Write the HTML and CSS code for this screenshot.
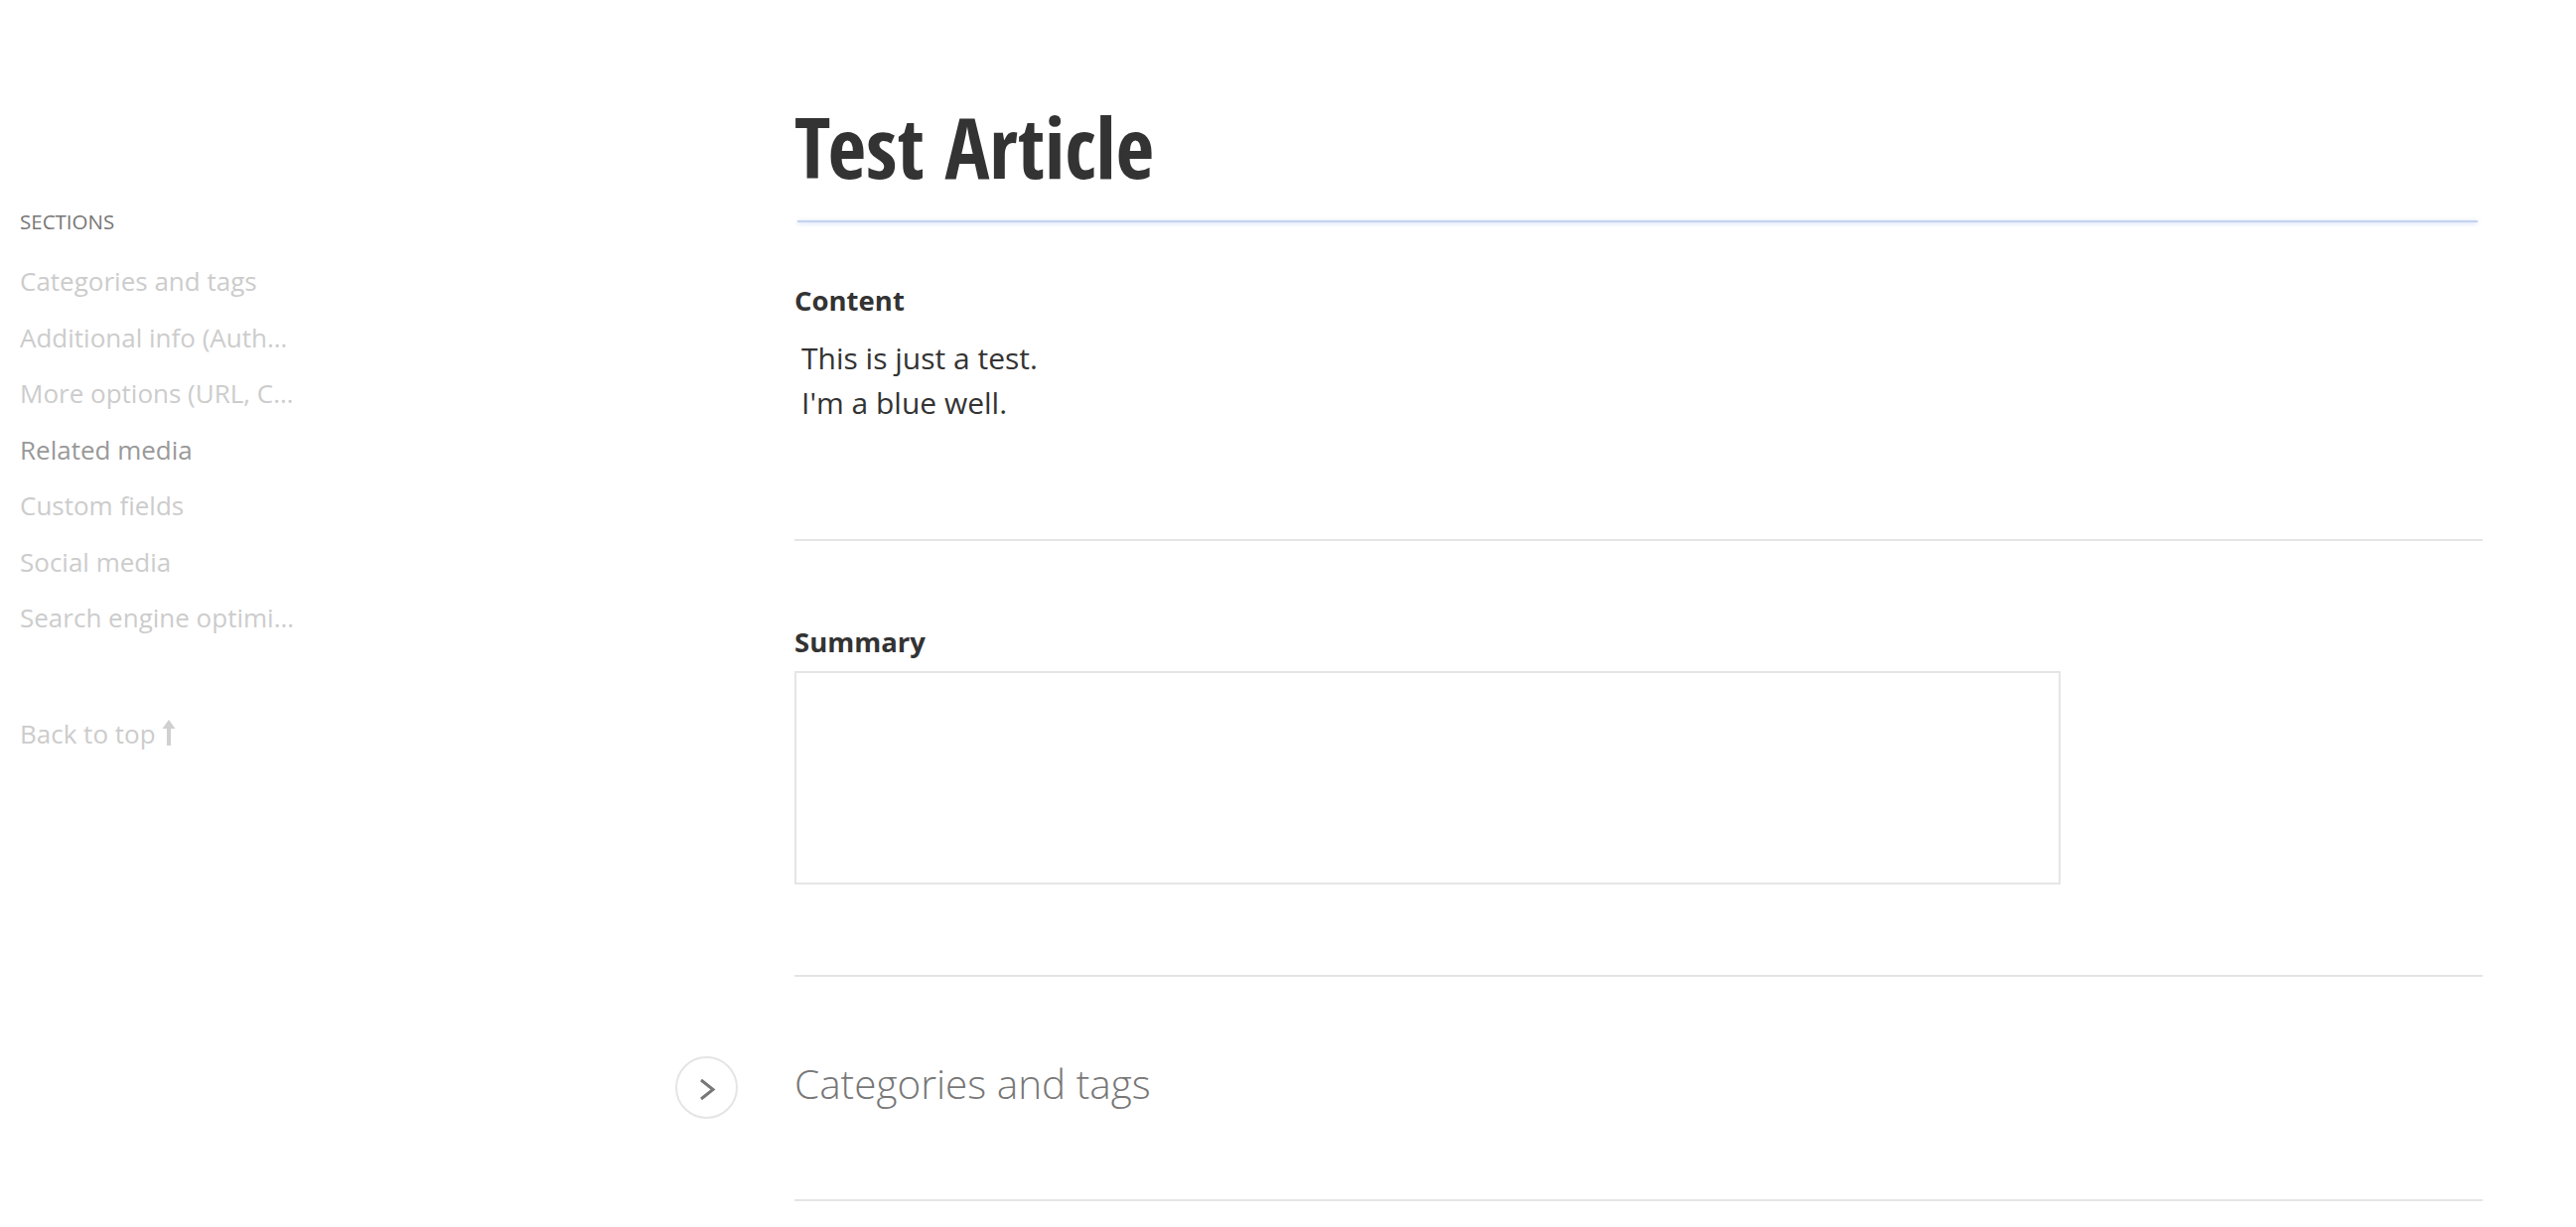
FILE: index.html
```html
<!DOCTYPE html>
<html lang="en">
<head>
    <meta charset="UTF-8">
    <meta name="viewport" content="width=device-width, initial-scale=1.0">
    <title>Test Article</title>
    <link rel="stylesheet" href="styles.css">
</head>
<body>
    <div class="page">
        <aside class="sidebar">
            <div class="sections-title">Sections</div>
            <ul class="section-nav">
                <li><a href="#categories">Categories and tags</a></li>
                <li><a href="#additional">Additional info (Authors, Date)</a></li>
                <li><a href="#options">More options (URL, Comments)</a></li>
                <li class="active"><a href="#media">Related media</a></li>
                <li><a href="#custom">Custom fields</a></li>
                <li><a href="#social">Social media</a></li>
                <li><a href="#seo">Search engine optimization</a></li>
            </ul>
            <a class="back-to-top" href="#top">Back to top
                <svg width="14" height="26" viewBox="0 0 14 26">
                    <path d="M7 0 L13.5 9 L9 9 L9 26 L5 26 L5 9 L0.5 9 Z" fill="#d0d0d0"/>
                </svg>
            </a>
        </aside>

        <main class="editor">
            <h1 class="title">Test Article</h1>
            <div class="title-rule"></div>

            <div class="field field-content">
                <label class="field-label">Content</label>
                <div class="well">
                    This is just a test.<br>
                    I'm a blue well.
                </div>
            </div>

            <div class="field field-summary">
                <label class="field-label" for="summary">Summary</label>
                <textarea id="summary" class="summary-input"></textarea>
            </div>

            <section class="collapsible" id="categories">
                <button class="toggle" type="button">
                    <svg width="59" height="59" viewBox="0 0 59 59">
                        <polyline points="24,22 36,31.5 24,41" fill="none" stroke="#777" stroke-width="3"/>
                    </svg>
                </button>
                <h2 class="collapsible-title">Categories and tags</h2>
            </section>
        </main>
    </div>
</body>
</html>
```

FILE: styles.css
```css
body {
    margin: 0;
    background: #fff;
    font-family: "Open Sans", "Liberation Sans", sans-serif;
    color: #333;
}
.page {
    display: grid;
    grid-template-columns: 800px 1700px;
}
.sidebar {
    padding: 208px 0 0 20px;
}
.sections-title {
    font-size: 20.5px;
    line-height: 30px;
    text-transform: uppercase;
    color: #777;
}
.section-nav {
    list-style: none;
    margin: 17px 0 0 0;
    padding: 0;
}
.section-nav li {
    width: 282px;
    font-size: 26px;
    line-height: 56.5px;
    white-space: nowrap;
    overflow: hidden;
    text-overflow: ellipsis;
    color: #cccccc;
}
.section-nav a {
    color: #cccccc;
    text-decoration: none;
}
.section-nav .active,
.section-nav .active a {
    color: #999;
}
.back-to-top {
    display: flex;
    align-items: center;
    gap: 6px;
    margin-top: 60px;
    font-size: 26px;
    line-height: 56.5px;
    color: #cccccc;
    text-decoration: none;
}
.back-to-top svg {
    margin-top: -2px;
}
.editor {
    padding-top: 98px;
}
.title {
    margin: 0;
    font-family: "Open Sans Condensed", "Open Sans", sans-serif;
    font-stretch: 75%;
    font-weight: 700;
    font-size: 84px;
    line-height: 100px;
    color: #333;
}
.title-rule {
    height: 2px;
    margin: 24px 5px 0 3px;
    background: #c3d3ee;
    box-shadow: 0 1px 4px rgba(120, 160, 230, 0.45);
}
.field {
    border-bottom: 2px solid #e5e5e5;
}
.field-label {
    display: block;
    font-size: 27.5px;
    line-height: 36px;
    font-weight: 700;
    color: #333;
}
.field-content {
    padding: 61px 0 115px 0;
}
.well {
    margin-top: 17px;
    padding: 0 7px;
    font-size: 30px;
    line-height: 45px;
    color: #333;
}
.field-summary {
    padding: 84px 0 91px 0;
}
.summary-input {
    display: block;
    box-sizing: border-box;
    width: 1275px;
    height: 215px;
    margin-top: 11px;
    border: 2px solid #e5e5e5;
    border-radius: 0;
    resize: none;
    font-family: inherit;
    font-size: 26.7px;
}
.collapsible {
    display: flex;
    align-items: flex-start;
    gap: 57px;
    padding: 78px 0 81px 0;
    border-bottom: 2px solid #e5e5e5;
}
.toggle {
    flex: none;
    width: 63px;
    height: 63px;
    margin: 2px 0 0 -120px;
    padding: 0;
    border: 2px solid #e5e5e5;
    border-radius: 50%;
    background: #fff;
    cursor: pointer;
}
.toggle svg {
    display: block;
}
.collapsible-title {
    margin: 0;
    font-size: 40.5px;
    line-height: 60px;
    font-weight: 300;
    color: #777;
}
```
